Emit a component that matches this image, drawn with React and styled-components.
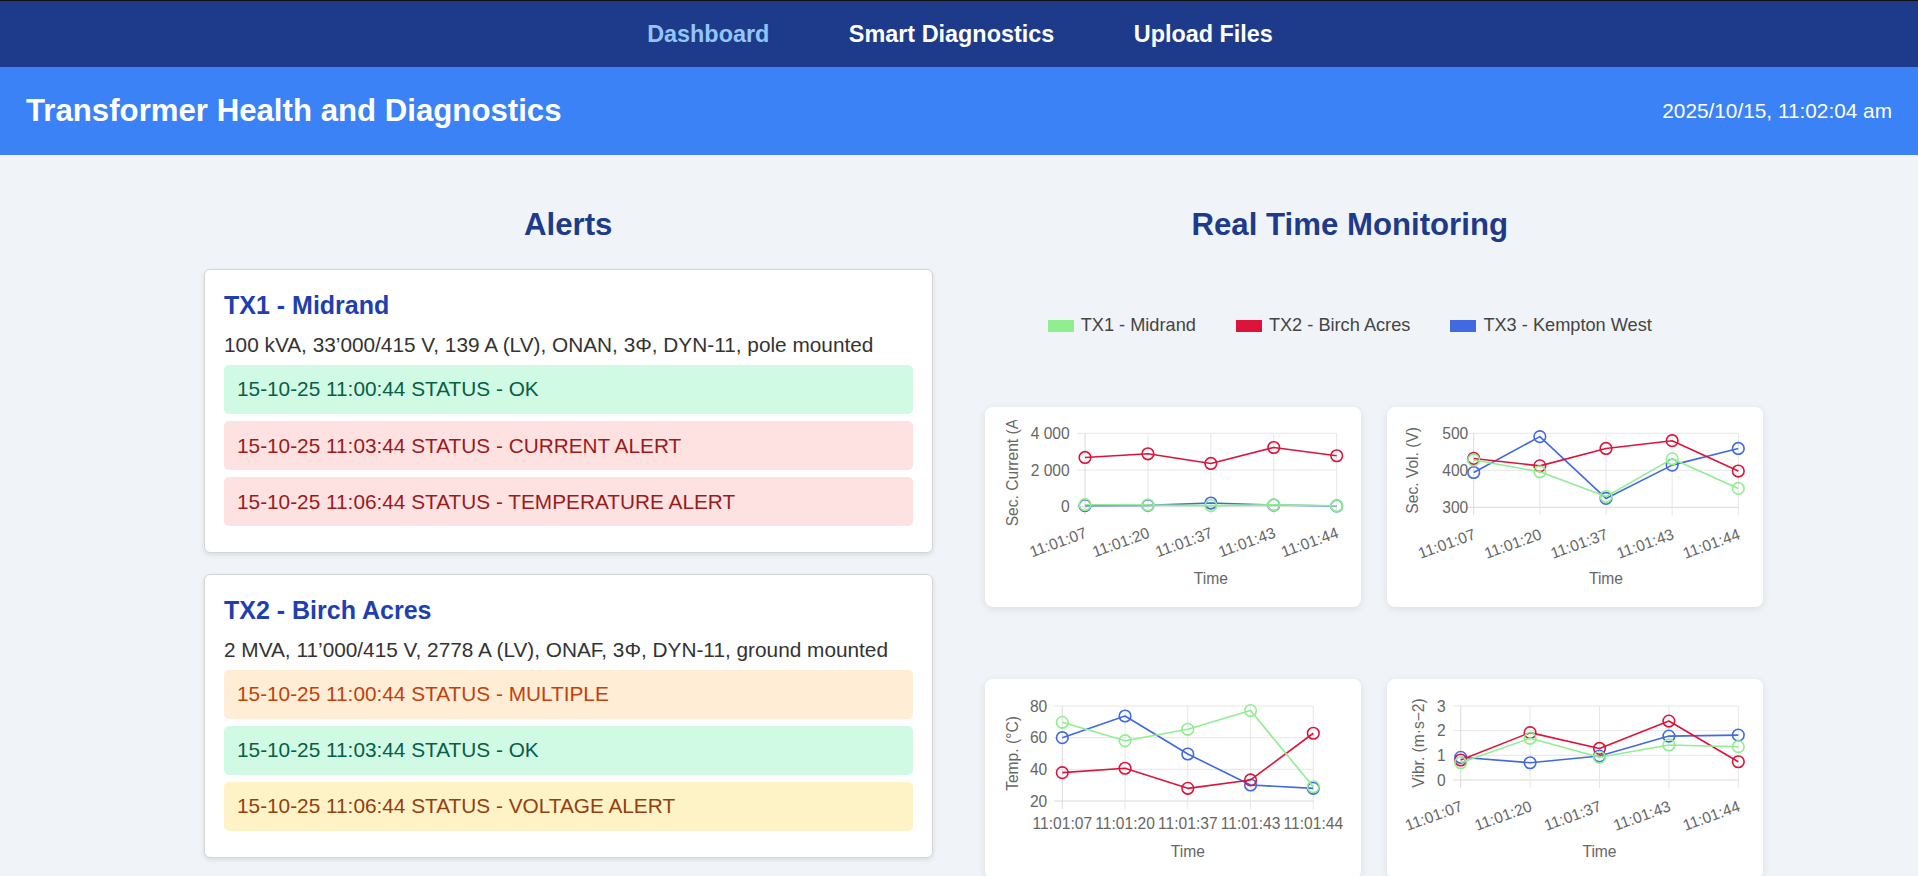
import React from "react";
import styled, { createGlobalStyle } from "styled-components";

const GlobalStyle = createGlobalStyle`
  *, *::before, *::after { box-sizing: border-box; }
  html { scrollbar-width: none; }
  html::-webkit-scrollbar { display: none; }
  html, body { margin: 0; padding: 0; background: #f0f4f8; }
  body { font-family: "Liberation Sans", Arial, Helvetica, sans-serif; color: #333; }
`;

const Page = styled.div`
  min-height: 100vh;
  background: #f0f4f8;
  border-top: 1px solid #111111;
`;

const Nav = styled.nav`
  display: flex;
  justify-content: center;
  gap: 79.5px;
  padding: 20.3px 0 18.7px 2px;
  background: #1e3a8a;
`;

const NavLink = styled.a`
  font-size: 23.4px;
  font-weight: 700;
  line-height: normal;
  text-decoration: none;
  color: ${(p) => (p.$active ? "#93c5fd" : "#ffffff")};
`;

const Header = styled.header`
  display: flex;
  align-items: center;
  justify-content: space-between;
  padding: 26.5px 26px 26px;
  background: #3b82f6;
  color: #ffffff;
`;

const Title = styled.h1`
  margin: 0;
  font-size: 31.2px;
  font-weight: 700;
  line-height: normal;
`;

const Clock = styled.div`
  font-size: 20.8px;
  line-height: normal;
`;

const Main = styled.main`
  padding: 26px 0;
`;

const Columns = styled.div`
  width: 1511px;
  margin: 0 auto;
  display: grid;
  grid-template-columns: minmax(0, 1fr) minmax(0, 1fr);
  column-gap: 52px;
`;

const Column = styled.section`
  display: flex;
  flex-direction: column;
  min-width: 0;
`;

const SectionTitle = styled.h2`
  margin: 25.9px 0;
  font-size: 31.2px;
  font-weight: 700;
  line-height: normal;
  text-align: center;
  color: #1e3a8a;
`;

const AlertCard = styled.article`
  background: #ffffff;
  border: 1px solid #d4d4d8;
  border-radius: 6px;
  box-shadow: 0 2px 5px rgba(0, 0, 0, 0.1);
  padding: 20.5px 19.5px 25.3px;
  & + & {
    margin-top: 21.5px;
  }
`;

const CardTitle = styled.h3`
  margin: 0 0 13px;
  font-size: 25px;
  font-weight: 700;
  line-height: normal;
  color: #1e40af;
`;

const Spec = styled.p`
  margin: 0 0 7.9px;
  font-size: 20.8px;
  line-height: normal;
  color: #333333;
`;

const AlertList = styled.div`
  display: flex;
  flex-direction: column;
  gap: 6.6px;
`;

const tones = {
  ok: { bg: "#d1fae5", fg: "#065f46" },
  danger: { bg: "#fee2e2", fg: "#991b1b" },
  orange: { bg: "#ffedd5", fg: "#c2410c" },
  warn: { bg: "#fef3c7", fg: "#92400e" },
};

const AlertRow = styled.div`
  padding: 12.75px 13px;
  border-radius: 5px;
  font-size: 20.8px;
  line-height: normal;
  background: ${(p) => tones[p.$tone].bg};
  color: ${(p) => tones[p.$tone].fg};
`;

const Legend = styled.div`
  display: flex;
  justify-content: center;
  gap: 40px;
  margin: 46px 0 71px;
`;

const LegendItem = styled.div`
  display: flex;
  align-items: center;
  gap: 7px;
  font-size: 18.2px;
  line-height: 21px;
  color: #444444;
`;

const Swatch = styled.span`
  display: block;
  width: 26px;
  height: 12.5px;
  background: ${(p) => p.$color};
`;

const ChartGrid = styled.div`
  display: grid;
  grid-template-columns: 376px 376px;
  column-gap: 26px;
  row-gap: 72px;
  width: max-content;
`;

const ChartCard = styled.div`
  width: 376px;
  height: 200px;
  padding: 13px;
  background: #ffffff;
  border-radius: 8px;
  box-shadow: 0 2px 8px rgba(0, 0, 0, 0.09);
`;

const ChartSvg = styled.svg`
  display: block;
  overflow: hidden;
  font-family: "Liberation Sans", Arial, Helvetica, sans-serif;
  font-size: 15.6px;
  text {
    fill: #666666;
  }
`;

const GREEN = "#90ee90";
const RED = "#dc143c";
const BLUE = "#4169e1";
const X_LABELS = ["11:01:07", "11:01:20", "11:01:37", "11:01:43", "11:01:44"];

const charts = [
  {
    key: "cur", left: 87, right: 338.7, top: 13.3, bottom: 86.7, yMin: 0, yMax: 4000,
    ticks: [[0, "0"], [2000, "2 000"], [4000, "4 000"]],
    yLabelX: 71.7, yTitle: "Sec. Current (A)", yTitleX: 14, rotated: true, labelY: 106.5, timeY: 164,
    series: [
      { color: GREEN, data: [110, 90, 60, 100, 50] },
      { color: RED, data: [2683, 2884, 2356, 3227, 2776] },
      { color: BLUE, data: [60, 70, 200, 90, 40] },
    ],
  },
  {
    key: "vol", left: 73.7, right: 338.3, top: 13.3, bottom: 87.3, yMin: 300, yMax: 500,
    ticks: [[300, "300"], [400, "400"], [500, "500"]],
    yLabelX: 68.3, yTitle: "Sec. Vol. (V)", yTitleX: 12, rotated: true, labelY: 108, timeY: 164.3,
    series: [
      { color: GREEN, data: [428, 396, 329, 431, 351] },
      { color: RED, data: [432, 412, 459, 480, 398] },
      { color: BLUE, data: [394, 491, 324, 414, 459] },
    ],
  },
  {
    key: "temp", left: 64.3, right: 315.3, top: 14, bottom: 109, yMin: 20, yMax: 80,
    ticks: [[20, "20"], [40, "40"], [60, "60"], [80, "80"]],
    yLabelX: 49.3, yTitle: "Temp. (°C)", yTitleX: 14, rotated: false, labelY: 137.3, timeY: 164.7,
    series: [
      { color: GREEN, data: [69.7, 58.1, 65.3, 77.1, 29.0] },
      { color: RED, data: [37.9, 40.7, 28, 33.3, 62.8] },
      { color: BLUE, data: [60, 73.7, 49.7, 30.1, 28] },
    ],
  },
  {
    key: "vib", left: 60.7, right: 338.3, top: 14, bottom: 88, yMin: 0, yMax: 3,
    ticks: [[0, "0"], [1, "1"], [2, "2"], [3, "3"]],
    yLabelX: 45.7, yTitle: "Vibr. (m·s−2)", yTitleX: 18.3, rotated: true, labelY: 108, timeY: 164.7,
    series: [
      { color: GREEN, data: [0.7, 1.69, 0.92, 1.42, 1.35] },
      { color: RED, data: [0.81, 1.92, 1.28, 2.39, 0.74] },
      { color: BLUE, data: [0.92, 0.7, 0.97, 1.78, 1.82] },
    ],
  },
];

function LineChart({ cfg }) {
  const { left, right, top, bottom, yMin, yMax, ticks } = cfg;
  const n = X_LABELS.length;
  const xs = X_LABELS.map((_, i) => left + ((right - left) * i) / (n - 1));
  const yOf = (v) => bottom - ((v - yMin) / (yMax - yMin)) * (bottom - top);
  const grid = "#e6e6e6";
  const drawOrder = [...cfg.series].reverse();

  return (
    <ChartSvg width="350" height="174" viewBox="0 0 350 174">
      {ticks.map(([v]) => (
        <line key={"h" + v} x1={left - 8} x2={right} y1={yOf(v)} y2={yOf(v)}
          stroke={v === yMin ? "#dadada" : grid} strokeWidth="1" />
      ))}
      {xs.map((x, i) => (
        <line key={"v" + i} x1={x} x2={x} y1={top} y2={bottom + 8}
          stroke={i === 0 ? "#dadada" : grid} strokeWidth="1" />
      ))}
      {ticks.map(([v, label]) => (
        <text key={"t" + v} x={cfg.yLabelX} y={yOf(v)} dy="0.36em" textAnchor="end">{label}</text>
      ))}
      <text transform={`translate(${cfg.yTitleX},${(top + bottom) / 2}) rotate(-90)`} textAnchor="middle" dy="0.36em">
        {cfg.yTitle}
      </text>
      {X_LABELS.map((label, i) =>
        cfg.rotated ? (
          <text key={"x" + i} transform={`translate(${xs[i] - 1},${cfg.labelY}) rotate(-20)`} textAnchor="end" dy="0.72em">
            {label}
          </text>
        ) : (
          <text key={"x" + i} x={xs[i]} y={cfg.labelY} textAnchor="middle">{label}</text>
        )
      )}
      <text x={(left + right) / 2} y={cfg.timeY} textAnchor="middle">Time</text>
      {drawOrder.map((s, si) => (
        <g key={"s" + si}>
          <polyline points={s.data.map((v, i) => `${xs[i]},${yOf(v)}`).join(" ")}
            fill="none" stroke={s.color} strokeWidth="1.6" strokeLinejoin="round" />
          {s.data.map((v, i) => (
            <circle key={i} cx={xs[i]} cy={yOf(v)} r="5.8" fill="none" stroke={s.color} strokeWidth="1.6" />
          ))}
        </g>
      ))}
    </ChartSvg>
  );
}

const transformers = [
  {
    name: "TX1 - Midrand",
    spec: "100 kVA, 33’000/415 V, 139 A (LV), ONAN, 3Φ, DYN-11, pole mounted",
    alerts: [
      { tone: "ok", text: "15-10-25 11:00:44 STATUS - OK" },
      { tone: "danger", text: "15-10-25 11:03:44 STATUS - CURRENT ALERT" },
      { tone: "danger", text: "15-10-25 11:06:44 STATUS - TEMPERATURE ALERT" },
    ],
  },
  {
    name: "TX2 - Birch Acres",
    spec: "2 MVA, 11’000/415 V, 2778 A (LV), ONAF, 3Φ, DYN-11, ground mounted",
    alerts: [
      { tone: "orange", text: "15-10-25 11:00:44 STATUS - MULTIPLE" },
      { tone: "ok", text: "15-10-25 11:03:44 STATUS - OK" },
      { tone: "warn", text: "15-10-25 11:06:44 STATUS - VOLTAGE ALERT" },
    ],
  },
];

const legend = [
  { color: GREEN, label: "TX1 - Midrand" },
  { color: RED, label: "TX2 - Birch Acres" },
  { color: BLUE, label: "TX3 - Kempton West" },
];

export default function App() {
  return (
    <Page>
      <GlobalStyle />
      <Nav>
        <NavLink href="#" $active>Dashboard</NavLink>
        <NavLink href="#">Smart Diagnostics</NavLink>
        <NavLink href="#">Upload Files</NavLink>
      </Nav>
      <Header>
        <Title>Transformer Health and Diagnostics</Title>
        <Clock>2025/10/15, 11:02:04 am</Clock>
      </Header>
      <Main>
        <Columns>
          <Column>
            <SectionTitle>Alerts</SectionTitle>
            {transformers.map((t) => (
              <AlertCard key={t.name}>
                <CardTitle>{t.name}</CardTitle>
                <Spec>{t.spec}</Spec>
                <AlertList>
                  {t.alerts.map((a) => (
                    <AlertRow key={a.text} $tone={a.tone}>{a.text}</AlertRow>
                  ))}
                </AlertList>
              </AlertCard>
            ))}
          </Column>
          <Column>
            <SectionTitle>Real Time Monitoring</SectionTitle>
            <Legend>
              {legend.map((l) => (
                <LegendItem key={l.label}>
                  <Swatch $color={l.color} />
                  {l.label}
                </LegendItem>
              ))}
            </Legend>
            <ChartGrid>
              {charts.map((c) => (
                <ChartCard key={c.key}>
                  <LineChart cfg={c} />
                </ChartCard>
              ))}
            </ChartGrid>
          </Column>
        </Columns>
      </Main>
    </Page>
  );
}
